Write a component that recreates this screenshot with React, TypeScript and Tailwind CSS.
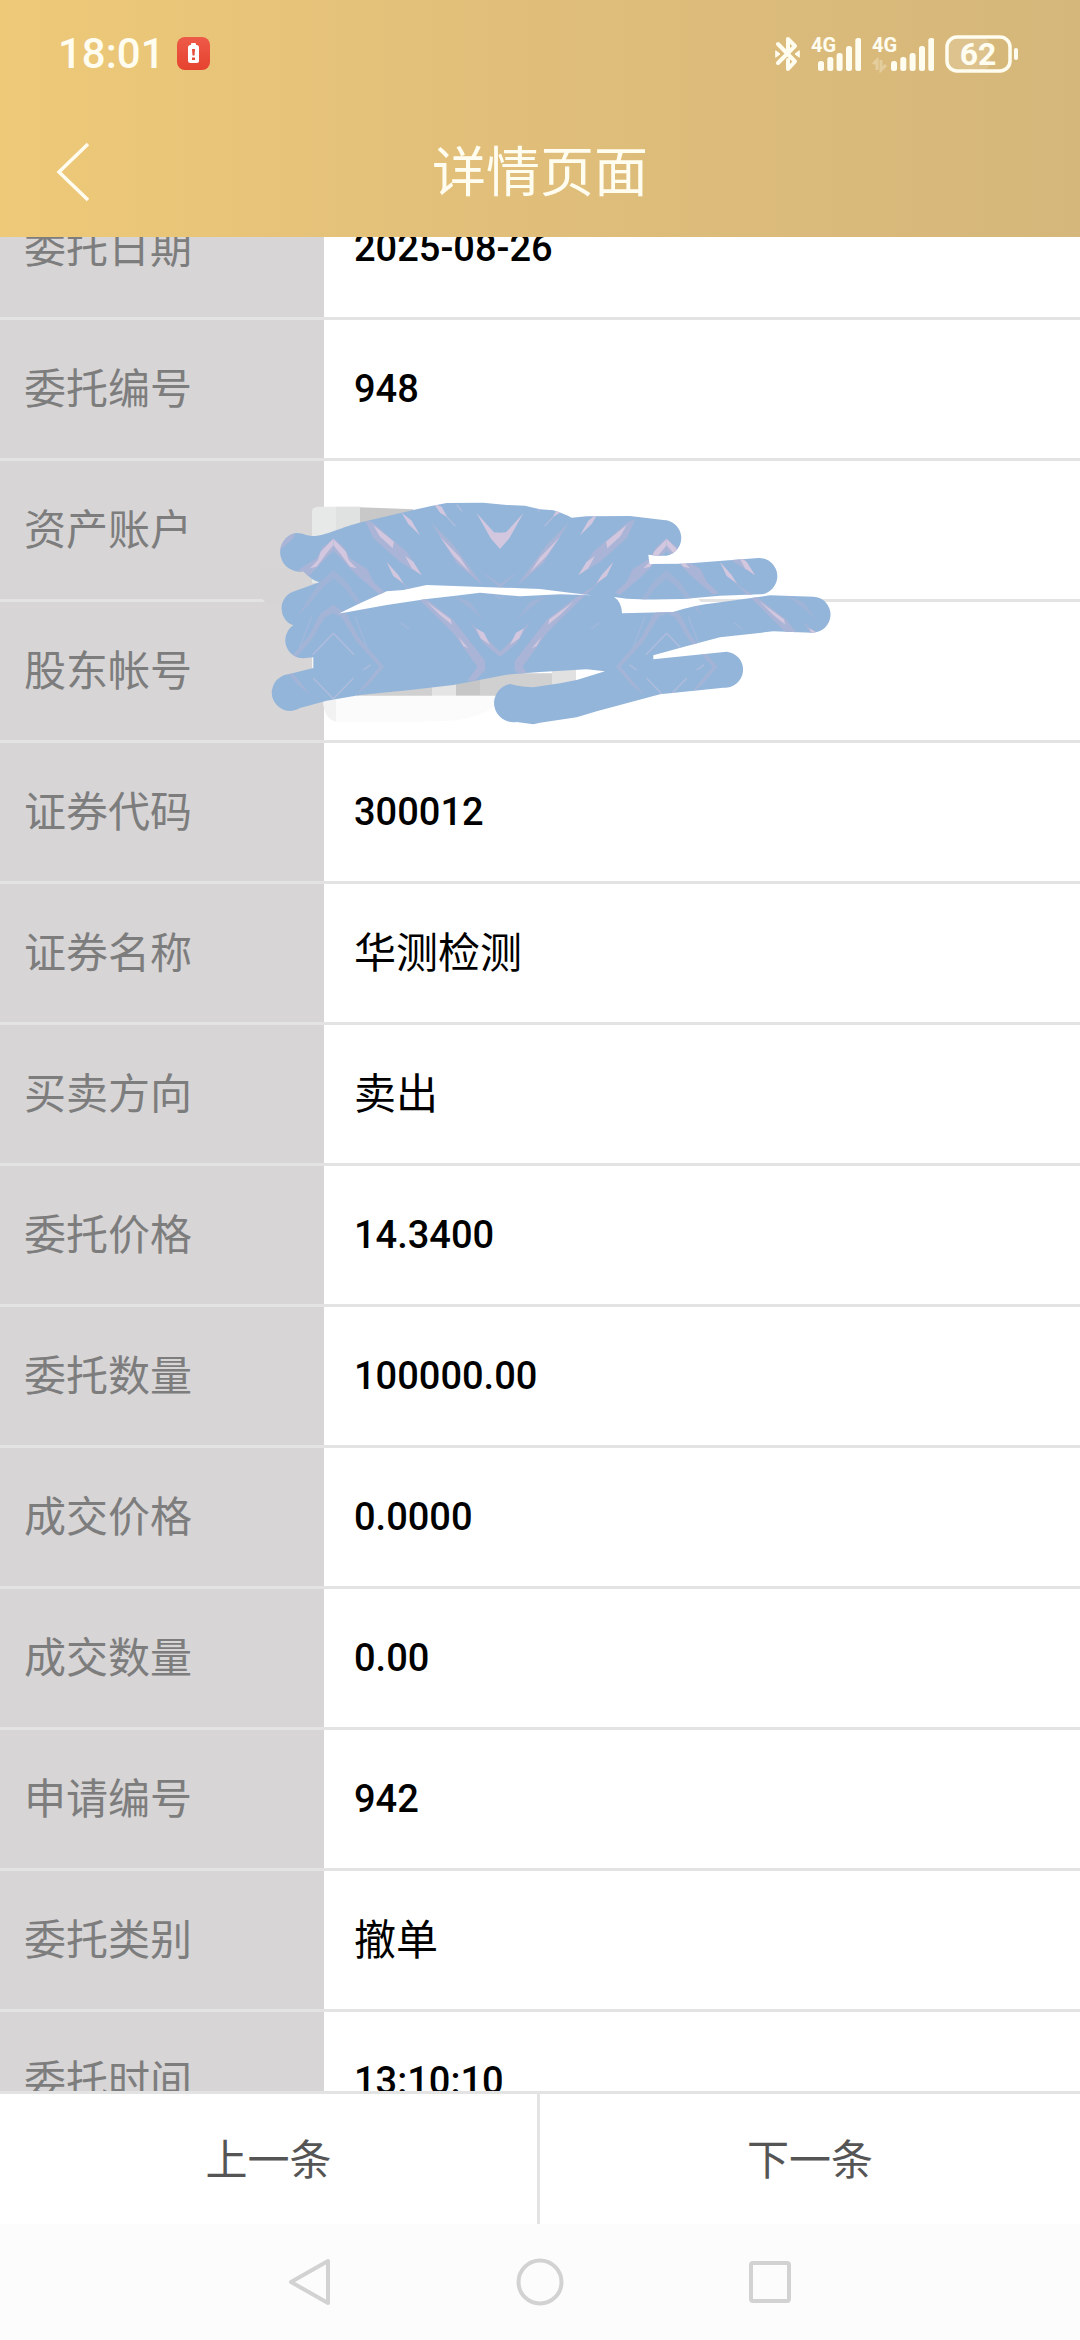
import { useLayoutEffect, useRef } from 'react';

const rows: [string, string][] = [
  ['委托日期', '2025-08-26'],
  ['委托编号', '948'],
  ['资产账户', ''],
  ['股东帐号', ''],
  ['证券代码', '300012'],
  ['证券名称', '华测检测'],
  ['买卖方向', '卖出'],
  ['委托价格', '14.3400'],
  ['委托数量', '100000.00'],
  ['成交价格', '0.0000'],
  ['成交数量', '0.00'],
  ['申请编号', '942'],
  ['委托类别', '撤单'],
  ['委托时间', '13:10:10'],
];

const BLOB =
  'M168 189 C195 190 200 199 225 198 C265 194 300 172 370 155 L520 120 Q570 108 620 99 L730 98 L800 105 L855 107 L900 118 L940 121 Q975 132 995 143 L1040 139 L1170 138 L1270 150 A54 54 0 0 1 1280 257 Q1255 258 1225 254 L1228 282 L1330 281 L1555 264 A54 54 0 0 1 1560 373 L1440 377 L1330 387 Q1220 390 1160 386 L1122 381 Q1145 395 1146 430 L1300 426 Q1360 405 1430 398 L1590 376 L1720 380 A54 54 0 0 1 1715 488 L1600 484 L1440 502 Q1340 528 1240 556 L1240 568 L1460 545 A54 54 0 0 1 1450 653 L1260 673 L1070 724 L1010 742 L900 758 L880 763 L830 756 A57 57 0 0 1 810 642 Q850 652 880 652 L960 640 L1010 630 L1095 604 L1040 598 L900 606 L800 614 L640 645 L510 660 L360 675 L260 692 L180 714 A55 55 0 1 1 145 613 L220 594 L220 562 L190 565 A54 54 0 0 1 160 466 A54 54 0 0 1 165 363 L238 337 Q215 331 190 304 A57 57 0 0 1 168 189 Z ' +
  'M295 431 L360 400 L440 364 L490 360 L560 345 L900 357 L990 368 L1055 376 L960 373 L840 379 L720 368 L640 378 L560 387 L440 405 Z';

function HalfPattern() {
  return (
    <g>
      <g fill="#a9b4d6">
        <path d="M280 205 L312 232 L330 265 L382 298 L400 335 L435 368 L420 374 L350 315 L300 262 L280 243 Z" />
        <path d="M280 300 L320 335 L388 438 L350 400 L310 350 L280 326 Z" opacity=".6" />
        <path d="M280 404 L320 432 L355 500 L432 590 L385 645 L345 678 L418 590 L350 515 L305 442 L280 430 Z" opacity=".75" />
        <path d="M375 150 L395 155 L500 245 L545 316 L480 275 L400 205 Z" />
        <path d="M440 276 L500 350 L560 388 L640 450 L735 572 L736 600 L705 632 L682 632 L712 590 L640 490 L545 395 L465 320 Z" />
        <path d="M640 378 L690 395 L728 448 L690 415 Z" opacity=".6" />
        <path d="M690 455 L735 500 L780 545 L780 560 L730 520 Z" />
        <path d="M720 300 L780 342 L780 354 Z" opacity=".7" />
        <path d="M575 160 L640 225 L728 346 L650 280 Z" />
      </g>
      <g fill="#d2c7de">
        <path d="M280 206 L318 245 L326 270 L350 295 L330 290 L300 250 L280 226 Z" />
        <path d="M400 165 L462 215 L458 235 L418 198 Z" />
        <path d="M495 258 L520 275 L545 316 L515 295 Z" />
        <path d="M440 276 L475 315 L490 340 L460 318 Z" />
        <path d="M560 395 L632 448 L636 464 L600 435 Z" />
        <path d="M655 500 L685 535 L670 528 Z" />
        <path d="M600 200 L660 262 L690 308 L640 258 Z" />
        <path d="M485 128 L515 152 L540 196 L505 162 Z" />
        <path d="M582 102 L605 110 L622 142 L600 128 Z" />
        <path d="M710 130 L762 187 L780 188 L780 237 L752 205 Z" />
        <path d="M708 475 L732 488 L750 525 L722 505 Z" />
      </g>
      <g fill="none" stroke="#b0bcdc" strokeWidth="4">
        <path d="M620 140 L646 168 M650 104 L666 124 M280 490 L342 554 M340 625 L280 686 M370 600 L392 584" />
        <path d="M345 440 L380 530 M735 350 L780 386 M482 458 L508 478" opacity=".5" />
      </g>
    </g>
  );
}

function Doodle() {
  return (
    <svg className="pointer-events-none absolute left-[240px] top-[291px] h-[280px] w-[600px]" viewBox="0 0 1800 840" aria-hidden="true">
      <defs>
        <clipPath id="blob">
          <path d={BLOB} clipRule="evenodd" />
        </clipPath>
      </defs>
      <path d="M60 295 H252 V405 H84 L60 380 Z" fill="#d6d4d4" />
      <path d="M252 380 H1370 L1385 400 H252 Z" fill="#fff" />
      <path d="M216 122 Q218 112 232 110 H288 V340 H216 Z" fill="#e7e8e8" />
      <path d="M288 110 H360 V200 H288 Z" fill="#e0e1e1" />
      <path d="M360 112 L520 118 V200 H360 Z" fill="#c8c8c8" />
      <path d="M216 560 H240 V600 H216 Z" fill="#f4f5f5" />
      <path d="M250 677 H790 Q760 735 640 752 Q460 758 290 755 Q250 750 250 690 Z" fill="#fbfbfb" />
      <path d="M250 690 H288 V755 Q250 745 250 690 Z" fill="#f2f2f2" />
      <path d="M350 640 H576 V677 H350 Z M720 610 H936 V677 H720 Z" fill="#d0d0d0" />
      <path d="M576 630 H648 V677 H576 Z" fill="#e4e4e4" />
      <path d="M648 620 H720 V677 H648 Z" fill="#c6c6c6" />
      <path d="M936 590 H1008 V650 H936 Z" fill="#e1e1e1" />
      <path d={BLOB} fill="#94b5da" fillRule="evenodd" />
      <g clipPath="url(#blob)">
        <HalfPattern />
        <g transform="translate(1560 0) scale(-1 1)"><HalfPattern /></g>
        <g transform="translate(560 0) scale(-1 1)"><HalfPattern /></g>
        <g transform="translate(1000 0)"><HalfPattern /></g>
      </g>
    </svg>
  );
}

function Signal({ data }: { data?: boolean }) {
  return (
    <svg className={data ? 'h-11 w-[62px]' : 'h-11 w-[50px]'} viewBox={data ? '0 0 62 44' : '0 0 50 44'} fill="#fffdf0">
      <text x="0" y="20" fontSize="20" fontWeight="700" fontFamily="Roboto, sans-serif">4G</text>
      <g transform={data ? 'translate(19 4)' : 'translate(7 4)'}>
        <rect x="0" y="25" width="6" height="10" rx="2.5" />
        <rect x="9.300" y="21" width="6" height="14" rx="2.5" />
        <rect x="18.600" y="17" width="6" height="18" rx="2.5" />
        <rect x="28" y="10" width="6" height="25" rx="2.5" />
        <rect x="37.300" y="2" width="6" height="33" rx="2.5" />
      </g>
      {data && (
        <path d="M1 32 L5 28 V38 M9 28 V38 L14 33" fill="none" stroke="#fffdf0" strokeOpacity=".3" strokeWidth="3" />
      )}
    </svg>
  );
}

function StatusBar() {
  return (
    <div className="flex h-[107px] items-center justify-between pl-[58px] pr-[62px]">
      <div className="flex items-center gap-3">
        <span className="font-['Roboto',sans-serif] text-[42px] leading-none font-medium">18:01</span>
        <svg className="size-[33px]" viewBox="0 0 33 33">
          <defs>
            <linearGradient id="alert" x1="0" y1="0" x2="0" y2="1">
              <stop offset="0" stopColor="#ee5a48" />
              <stop offset="1" stopColor="#e5432f" />
            </linearGradient>
          </defs>
          <rect width="33" height="33" rx="8" fill="url(#alert)" />
          <rect x="14" y="6" width="5" height="3" rx="1" fill="#fff" />
          <rect x="11" y="8" width="11" height="18" rx="2.5" fill="#fff" />
          <path d="M15 12 H18 L17.500 18.500 H15.500 Z M15 20.500 H18 V23 H15 Z" fill="#e74a37" />
        </svg>
      </div>
      <div className="flex items-center gap-[11px]">
        <svg className="h-9 w-[25px]" viewBox="0 0 25 36" fill="none" stroke="#fffdf0" strokeWidth="4" strokeLinejoin="round" strokeLinecap="round">
          <path d="M3 8 L20 25.500 L13 33 V24 M3 27 L20 10 L13 3 V14" />
          <path d="M1 15 L5 18 L1 21 Z M24 15 L20 18 L24 21 Z" fill="#fffdf0" strokeWidth="1" />
        </svg>
        <Signal />
        <Signal data />
        <svg className="h-[38px] w-[73px]" viewBox="0 0 73 38">
          <rect x="4" y="3" width="41" height="32" rx="8" fill="#fff" fillOpacity=".15" />
          <rect x="2" y="2" width="63" height="34" rx="10" fill="none" stroke="#fffdf0" strokeWidth="3.500" />
          <rect x="69" y="13" width="4" height="12" rx="2" fill="#fffdf0" />
          <text x="33" y="30" textAnchor="middle" fontSize="32" fontWeight="700" fontFamily="Roboto, sans-serif" fill="#fffdf0">62</text>
        </svg>
      </div>
    </div>
  );
}

export default function App() {
  const scroller = useRef<HTMLElement>(null);

  useLayoutEffect(() => {
    if (scroller.current) scroller.current.scrollTop = 58;
  }, []);

  return (
    <div className="flex h-screen flex-col bg-white font-['Roboto','Noto_Sans_CJK_SC',sans-serif]">
      <header className="shrink-0 bg-linear-to-r from-[#eec978] via-[#e0be7a] to-[#d5b77b] text-[#fffdf0]">
        <StatusBar />
        <div className="grid h-[130px] grid-cols-[1fr_auto_1fr] items-center">
          <button type="button" aria-label="返回" className="ml-[54px] w-10">
            <svg className="h-[60px] w-9" viewBox="0 0 36 60" fill="none" stroke="#fffdf0" strokeWidth="3.500">
              <path d="M34 2 L5 30 L34 58" />
            </svg>
          </button>
          <h1 className="pt-1 text-[54px] leading-none">详情页面</h1>
        </div>
      </header>

      <main ref={scroller} className="min-h-0 flex-1 overflow-y-auto [scrollbar-width:none]">
        <div className="relative">
          <table className="w-full table-fixed border-separate border-spacing-0 text-left">
            <tbody>
              {rows.map(([label, value]) => (
                <tr key={label}>
                  <th scope="row" className="h-[141px] w-[30%] border-b-3 border-[#e3e3e3] bg-[#d7d5d6] bg-clip-padding p-0 pt-0.5 pl-6 text-[42px] leading-none font-normal text-[#7d7d7d]">
                    {label}
                  </th>
                  <td className={/^[\d.:-]+$/.test(value) ? 'border-b-3 border-[#e3e3e3] p-0 pl-[30px] text-[38px] leading-none font-medium text-black' : 'border-b-3 border-[#e3e3e3] p-0 pt-0.5 pl-[30px] text-[42px] leading-none text-black'}>
                    {value}
                  </td>
                </tr>
              ))}
            </tbody>
          </table>
          <Doodle />
        </div>
      </main>

      <div className="grid h-[133px] shrink-0 grid-cols-2 border-t-3 border-[#e3e3e3] text-[42px] text-[#555]">
        <button type="button" className="border-r-3 border-[#e3e3e3] pt-0.5">上一条</button>
        <button type="button" className="pt-0.5">下一条</button>
      </div>

      <nav className="flex h-[116px] shrink-0 items-center justify-center bg-[#fcfcfc]">
        <button type="button" aria-label="后退" className="flex w-[230px] justify-center">
          <svg className="size-12" viewBox="0 0 48 48" fill="none" stroke="#d2d2d2" strokeWidth="4" strokeLinejoin="round">
            <path d="M42 3 V45 L5 24 Z" />
          </svg>
        </button>
        <button type="button" aria-label="主页" className="flex w-[230px] justify-center">
          <svg className="size-12" viewBox="0 0 48 48" fill="none" stroke="#d2d2d2" strokeWidth="4">
            <circle cx="24" cy="24" r="21.500" />
          </svg>
        </button>
        <button type="button" aria-label="最近任务" className="flex w-[230px] justify-center">
          <svg className="size-12" viewBox="0 0 48 48" fill="none" stroke="#d2d2d2" strokeWidth="4">
            <rect x="5" y="5" width="38" height="38" rx="2" />
          </svg>
        </button>
      </nav>
    </div>
  );
}
